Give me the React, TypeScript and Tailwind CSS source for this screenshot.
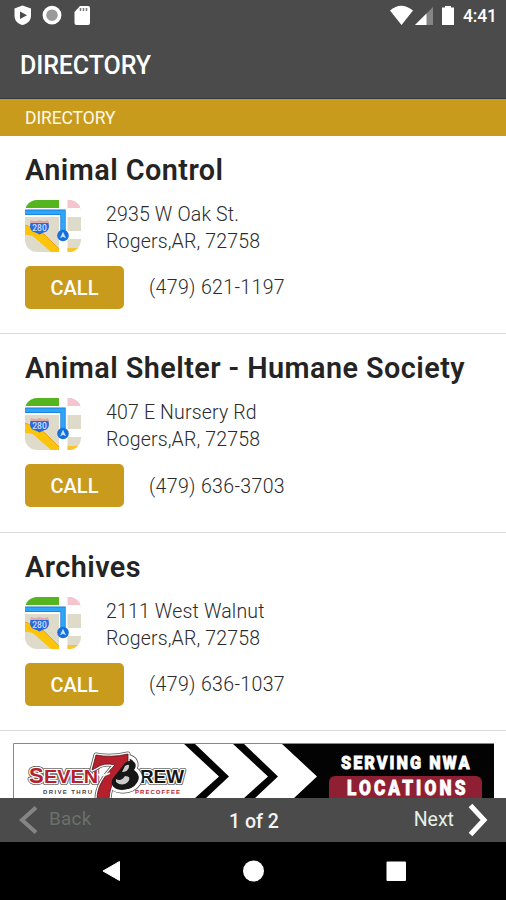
type Listing = {
    name: string;
    street: string;
    city: string;
    phone: string;
};

const listings: Listing[] = [
    { name: "Animal Control", street: "2935 W Oak St.", city: "Rogers,AR, 72758", phone: "(479) 621-1197" },
    { name: "Animal Shelter - Humane Society", street: "407 E Nursery Rd", city: "Rogers,AR, 72758", phone: "(479) 636-3703" },
    { name: "Archives", street: "2111 West Walnut", city: "Rogers,AR, 72758", phone: "(479) 636-1037" },
];

const StatusBar = () => (
    <div className="h-[33px] pl-[13px] pr-[9px] flex items-center justify-between">
        <svg width="80" height="22" viewBox="0 0 80 22" className="mt-[-2px]">
            <path d="M9.5 0.5 18 3.5V10.5C18 15.5 14.5 18.8 9.5 20 4.5 18.8 1.5 15.5 1.5 10.5V3.5Z" fill="#fff" />
            <path d="M7 6.5 14 10.2 7 14Z" fill="#4b4b4b" />
            <circle cx="39" cy="10.2" r="7.6" fill="#999" stroke="#fff" strokeWidth="3.6" />
            <path d="M67 1H75Q77 1 77 3V18Q77 20 75 20H63.5Q61.5 20 61.5 18V7Z" fill="#fff" />
            <path d="M67.5 3v3M70.5 3v3M73.5 3v3" stroke="#777" strokeWidth="1.5" />
        </svg>
        <div className="flex items-center">
            <svg width="66" height="22" viewBox="0 0 66 22" className="mt-[-2px]">
                <path d="M0 5.5Q11 -4 23 5.5L11.5 20Z" fill="#fff" />
                <path d="M43 2V20H25Z" fill="#858585" />
                <path d="M36.5 8.5V20H25Z" fill="#fff" />
                <path d="M55 1H61V2.5H64V20H52V2.5H55Z" fill="#fff" />
            </svg>
            <span className="w-[34px] ml-[7px] pb-[2px] text-[17.5px] leading-5 font-medium tracking-[-0.2px] whitespace-nowrap">4:41</span>
        </div>
    </div>
);

const MapIcon = () => (
    <svg width="56" height="52" viewBox="0 0 56 52" className="shrink-0">
        <defs>
            <clipPath id="tile">
                <rect width="56" height="52" rx="12" />
            </clipPath>
        </defs>
        <g clipPath="url(#tile)">
            <rect width="56" height="52" fill="#dfdbca" />
            <path d="M0 0H34V8H0Z" fill="#55b51f" />
            <path d="M42.5 0H56V8H42.5Z" fill="#f5c4cf" />
            <path d="M0 8H56V17H0ZM34 0H42.5V52H34ZM42 31H56V39H42Z" fill="#fff" />
            <path d="M42.5 48H56V52H42.5Z" fill="#f9c52e" />
            <path d="M0 25C10 29 14 30 20 35L34 49V52H26L10 38C7 35 4 35 0 35Z" fill="#fcc40a" />
            <path d="M0 25C10 29 14 30 20 35L34 49" fill="none" stroke="#eba31c" strokeWidth="1" />
            <path d="M0 12.3H38V33" fill="none" stroke="#1a7bdd" strokeWidth="5.4" />
            <path d="M0 12.3H38V33" fill="none" stroke="#2da6f5" strokeWidth="3.8" />
            <path d="M5.5 23Q4 29 7.5 31.5 11 32.5 14.5 34.5 18 32.5 21.5 31.5 25 29 23.5 23Z" fill="#2a68dc" />
            <path d="M6 20Q10 22 14.5 20 19 22 23 20L24 23H5Z" fill="#dfaaae" />
            <text x="14.5" y="31" textAnchor="middle" fontSize="8.5" fontWeight="500" fill="#cfe0ff" className="font-['Roboto',sans-serif]">280</text>
            <circle cx="38" cy="35.5" r="5.8" fill="#1670dc" />
            <path d="M38 31.8 41 38.2 38 36.8 35 38.2Z" fill="#c9e4ff" />
        </g>
    </svg>
);

const ListingRow = ({ item }: { item: Listing }) => (
    <li className="h-[198.5px] px-[25px] pt-[18px] border-b border-[#d9d9d9]">
        <h2 className="text-[28.8px] leading-8 font-semibold tracking-[0.45px] text-[#242424] whitespace-nowrap">{item.name}</h2>
        <div className="mt-[14px] flex gap-[25px]">
            <MapIcon />
            <p className="pt-[1px] text-[19.5px] leading-[27px] font-light tracking-[0.17px] text-[#2b2b2b] whitespace-nowrap">
                {item.street}
                <br />
                {item.city}
            </p>
        </div>
        <div className="mt-[11px] flex items-center gap-[25px]">
            <button className="w-[99px] h-[43px] pt-[1px] rounded-[5px] bg-[#c99b1d] text-white text-[20px] font-medium">CALL</button>
            <span className="pt-[2px] text-[19.5px] font-light tracking-[0.35px] text-[#2b2b2b] whitespace-nowrap">{item.phone}</span>
        </div>
    </li>
);

const AdBanner = () => (
    <svg width="482" height="56" viewBox="0 0 482 56" className="block ml-[13px]">
        <rect width="482" height="80" fill="#fff" />
        <path d="M268 0H481V56H280L304 33.5Z" fill="#030304" />
        <path d="M170 0H181L216 33.5 192 56H181L206 33.5Z" fill="#030304" />
        <path d="M219 0H230L265 33.5 241 56H230L255 33.5Z" fill="#030304" />

        {/* dark halo, white gap, then the letters */}
        <g fontFamily="Liberation Sans, sans-serif" fontWeight="700" strokeLinejoin="round" className="[paint-order:stroke]">
            <g stroke="#555" strokeWidth="4.2" fill="#555">
                <text x="16" y="40" fontSize="22">S</text>
                <text x="31" y="40" fontSize="18" textLength="54" lengthAdjust="spacingAndGlyphs">EVEN</text>
                <text x="127" y="40" fontSize="18" textLength="44" lengthAdjust="spacingAndGlyphs">REW</text>
            </g>
            <g stroke="#fff" strokeWidth="2.6" fill="#b5202d">
                <text x="16" y="40" fontSize="22">S</text>
                <text x="31" y="40" fontSize="18" textLength="54" lengthAdjust="spacingAndGlyphs">EVEN</text>
                <text x="127" y="40" fontSize="18" fill="#171717" textLength="44" lengthAdjust="spacingAndGlyphs">REW</text>
            </g>
        </g>
        <g strokeLinejoin="round">
            <path d="M83 12Q98 15 115 11V19C105 30 97 40 96 56H84C84 43 92 32 102 22Q91 19 83 25L79 27Z" fill="none" stroke="#555" strokeWidth="5" />
            <path d="M104 20C112 8 127 15 122 26 134 34 124 49 109 48 96 48 94 35 103 33Z" fill="none" stroke="#555" strokeWidth="5" />
            <path d="M104 20C112 8 127 15 122 26 134 34 124 49 109 48 96 48 94 35 103 33Z" fill="#171717" stroke="#fff" strokeWidth="3.4" />
            <path d="M83 12Q98 15 115 11V19C105 30 97 40 96 56H84C84 43 92 32 102 22Q91 19 83 25L79 27Z" fill="#b5202d" stroke="#fff" strokeWidth="3.4" />
            <path d="M83 12Q98 15 115 11V19C105 30 97 40 96 56H84C84 43 92 32 102 22Q91 19 83 25L79 27Z" fill="#b5202d" stroke="#5b1018" strokeWidth="0.8" />
            <path d="M112 20C119 15 126 20 121 27 131 34 122 47 109 47 99 47 96 39 101 34Z" fill="#171717" />
            <path d="M112 23Q117 20 116 24 115 29 109 29ZM103 36Q108 39 112 33 119 33 115 39 109 44 103 39Z" fill="#ccc" />
        </g>
        <path d="M84 31Q90 34 97 30" fill="none" stroke="#fff" strokeWidth="1.5" />
        <g fontFamily="Liberation Sans, sans-serif" fontSize="6" fontWeight="700">
            <text x="30" y="51" fill="#444" textLength="49">DRIVE THRU</text>
            <text x="122" y="51" fill="#b5202d" textLength="45">PRECOFFEE</text>
        </g>

        <rect x="316" y="33" width="153" height="35" rx="6" fill="#8f2033" />
        <g fontFamily="Roboto, sans-serif" fontWeight="900" fill="#fff" stroke="#fff" strokeWidth="0.8">
            <text transform="translate(328 25.5) scale(0.88 1)" fontSize="18.5" textLength="146">SERVING NWA</text>
            <text transform="translate(334 52) scale(0.84 1)" fontSize="20.5" textLength="141">LOCATIONS</text>
        </g>
        <path d="M0.5 56V0.5H481" fill="none" stroke="#888" />
    </svg>
);

const Pager = () => (
    <nav className="h-[44px] px-[18px] bg-[#4b4b4b] flex items-center justify-between">
        <button className="w-[140px] flex items-center gap-[11px] text-[#687269]">
            <svg width="20" height="30" viewBox="0 0 20 30">
                <path d="M18 2.5 4 15 18 27.5" fill="none" stroke="#858585" strokeWidth="4" />
            </svg>
            <span className="pb-[3px] text-[19px] leading-6 tracking-[0.2px]">Back</span>
        </button>
        <span className="pt-[3px] pl-[2px] text-[19.5px] font-medium text-[#f4f4f4] whitespace-nowrap">1 of 2</span>
        <button className="w-[140px] flex items-center justify-end gap-[14px] text-[#e3f1e6]">
            <span className="pb-[1px] text-[19.5px] leading-6">Next</span>
            <svg width="20" height="34" viewBox="0 0 20 34">
                <path d="M2.5 2.5 16 17 2.5 31.5" fill="none" stroke="#fff" strokeWidth="5" />
            </svg>
        </button>
    </nav>
);

const SystemNav = () => (
    <div className="h-[58px] bg-black">
        <svg width="506" height="58" viewBox="0 0 506 58">
            <path d="M103 29 119.5 19.5V38.5Z" fill="#fff" stroke="#fff" strokeLinejoin="round" />
            <circle cx="253.5" cy="29" r="10.5" fill="#fff" />
            <rect x="386.5" y="19.5" width="19.5" height="19.5" rx="1" fill="#fff" />
        </svg>
    </div>
);

const App = () => {
    return (
        <div className="w-[506px] h-[900px] overflow-hidden flex flex-col bg-white font-['Roboto',sans-serif]">
            <header className="h-[99px] shrink-0 bg-[#4b4b4b] border-b border-[#343a3c] text-white">
                <StatusBar />
                <h1 className="pl-[20px] pt-[17px] text-[25px] leading-8 font-medium tracking-[-0.1px]">DIRECTORY</h1>
            </header>
            <div className="h-[36.5px] shrink-0 pl-[25px] pt-[2px] flex items-center bg-[#c99b1d] text-[17.5px] tracking-[-0.1px] text-[#fff9e8]">DIRECTORY</div>
            <ul className="shrink-0">
                {listings.map((item) => (
                    <ListingRow key={item.name} item={item} />
                ))}
            </ul>
            <div className="flex-1 min-h-0 pt-[12px] overflow-hidden">
                <AdBanner />
            </div>
            <Pager />
            <SystemNav />
        </div>
    );
};

export default App;
